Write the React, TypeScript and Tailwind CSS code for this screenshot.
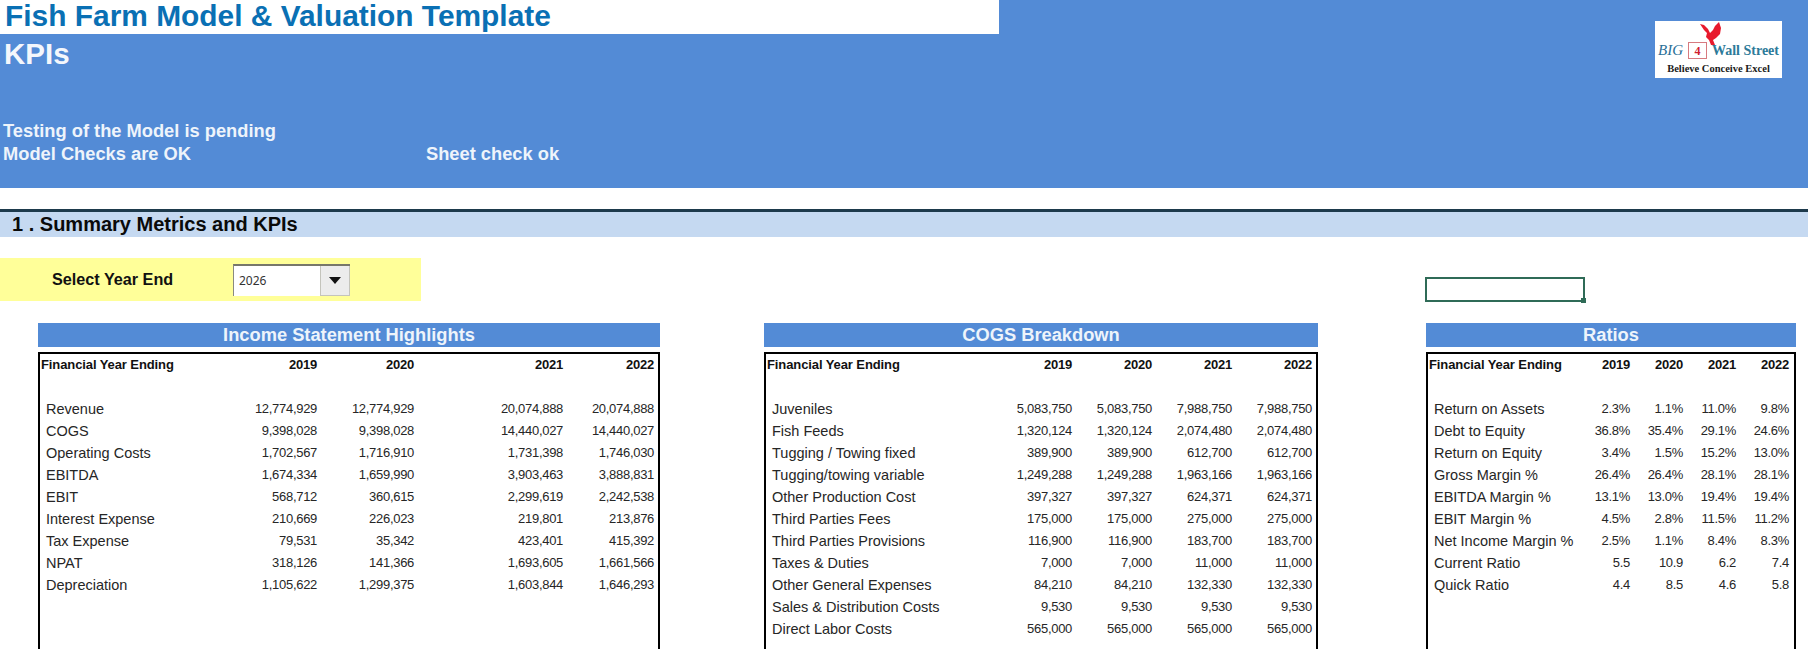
const income = [
  ["Revenue", "12,774,929", "12,774,929", "20,074,888", "20,074,888"],
  ["COGS", "9,398,028", "9,398,028", "14,440,027", "14,440,027"],
  ["Operating Costs", "1,702,567", "1,716,910", "1,731,398", "1,746,030"],
  ["EBITDA", "1,674,334", "1,659,990", "3,903,463", "3,888,831"],
  ["EBIT", "568,712", "360,615", "2,299,619", "2,242,538"],
  ["Interest Expense", "210,669", "226,023", "219,801", "213,876"],
  ["Tax Expense", "79,531", "35,342", "423,401", "415,392"],
  ["NPAT", "318,126", "141,366", "1,693,605", "1,661,566"],
  ["Depreciation", "1,105,622", "1,299,375", "1,603,844", "1,646,293"],
];

const cogs = [
  ["Juveniles", "5,083,750", "5,083,750", "7,988,750", "7,988,750"],
  ["Fish Feeds", "1,320,124", "1,320,124", "2,074,480", "2,074,480"],
  ["Tugging / Towing fixed", "389,900", "389,900", "612,700", "612,700"],
  ["Tugging/towing variable", "1,249,288", "1,249,288", "1,963,166", "1,963,166"],
  ["Other Production Cost", "397,327", "397,327", "624,371", "624,371"],
  ["Third Parties Fees", "175,000", "175,000", "275,000", "275,000"],
  ["Third Parties Provisions", "116,900", "116,900", "183,700", "183,700"],
  ["Taxes & Duties", "7,000", "7,000", "11,000", "11,000"],
  ["Other General Expenses", "84,210", "84,210", "132,330", "132,330"],
  ["Sales & Distribution Costs", "9,530", "9,530", "9,530", "9,530"],
  ["Direct Labor Costs", "565,000", "565,000", "565,000", "565,000"],
];

const ratios = [
  ["Return on Assets", "2.3%", "1.1%", "11.0%", "9.8%"],
  ["Debt to Equity", "36.8%", "35.4%", "29.1%", "24.6%"],
  ["Return on Equity", "3.4%", "1.5%", "15.2%", "13.0%"],
  ["Gross Margin %", "26.4%", "26.4%", "28.1%", "28.1%"],
  ["EBITDA Margin %", "13.1%", "13.0%", "19.4%", "19.4%"],
  ["EBIT Margin %", "4.5%", "2.8%", "11.5%", "11.2%"],
  ["Net Income Margin %", "2.5%", "1.1%", "8.4%", "8.3%"],
  ["Current Ratio", "5.5", "10.9", "6.2", "7.4"],
  ["Quick Ratio", "4.4", "8.5", "4.6", "5.8"],
];

const years = ["2019", "2020", "2021", "2022"];

function Panel({
  title,
  rows,
  width,
  cols,
  pad,
}: {
  title: string;
  rows: string[][];
  width: string;
  cols: string;
  pad: string;
}) {
  return (
    <div className={`flex flex-col ${width}`}>
      <div className="h-[24px] bg-[#538bd6] text-center text-[18.3px] leading-[24px] font-bold text-[#eef4fb]">{title}</div>
      <div className={`mt-[5px] flex-1 border-2 border-b-0 border-black ${pad}`}>
        <div className={`grid h-[44px] items-start ${cols}`}>
          <div className="pl-[1px] text-[13px] leading-[22px] font-bold tracking-[-0.1px] whitespace-nowrap text-[#111]">Financial Year Ending</div>
          {years.map((y) => (
            <div key={y} className="text-right text-[13px] leading-[22px] font-bold tracking-[-0.2px] text-[#111]">{y}</div>
          ))}
        </div>
        {rows.map(([label, ...vals]) => (
          <div key={label} className={`grid h-[22px] items-center ${cols}`}>
            <div className="pl-[6px] text-[14.5px] leading-[22px] whitespace-nowrap text-[#262626]">{label}</div>
            {vals.map((v, i) => (
              <div key={i} className="text-right text-[13px] leading-[22px] tracking-[-0.3px] whitespace-nowrap text-[#262626]">{v}</div>
            ))}
          </div>
        ))}
      </div>
    </div>
  );
}

function Logo() {
  return (
    <div className="relative mt-[21px] mr-[26px] flex h-[57px] w-[127px] flex-col items-center justify-end bg-white pb-[3px] font-['Liberation_Serif',serif]">
      <svg className="absolute top-[1px] left-[45px] h-[24px] w-[21px]" viewBox="0 0 21 24">
        <path
          d="M0 2 L4 3 L8 7 L10 11 L13 8 L15 4 L19 0 L21 6 L20 12 L16 16 L13 18 L15 23 L11 23 L9 18 L6 15 L7 11 L4 8 Z"
          fill="#e8192c"
        />
      </svg>
      <div className="flex h-[17px] items-center">
        <span className="text-[15px] text-[#2a6f97] italic">BIG</span>
        <span className="mx-[5px] flex h-[17px] w-[19px] items-center justify-center border border-[#d77a80] text-[12px] font-bold text-[#d0202f]">4</span>
        <span className="text-[14px] font-bold whitespace-nowrap text-[#2d7a99]">Wall Street</span>
      </div>
      <div className="mt-[3px] text-[10.5px] leading-[13px] font-bold whitespace-nowrap text-[#1b1b1b]">Believe Conceive Excel</div>
    </div>
  );
}

export default function App() {
  return (
    <div className="flex h-[649px] w-[1808px] flex-col overflow-hidden bg-white font-['Liberation_Sans',sans-serif]">
      <div className="flex h-[188px] justify-between bg-[#538bd6]">
        <div className="w-[999px]">
          <div className="h-[34px] bg-white pl-[5px] text-[29.9px] leading-[32px] font-bold whitespace-nowrap text-[#0a70b4]">
            Fish Farm Model &amp; Valuation Template
          </div>
          <div className="pl-[4px] text-[29.5px] leading-[40px] font-bold text-[#f4f7fc]">KPIs</div>
          <div className="mt-[45px] pl-[3px] text-[18.3px] leading-[23px] font-bold text-[#eef4fb]">Testing of the Model is pending</div>
          <div className="flex text-[18.3px] leading-[23px] font-bold text-[#eef4fb]">
            <div className="w-[426px] pl-[3px]">Model Checks are OK</div>
            <div>Sheet check ok</div>
          </div>
        </div>
        <Logo />
      </div>

      <div className="mt-[21px] h-[28px] border-t-[3px] border-[#1d3a4c] bg-[#c5d9f1] pl-[12px] text-[20px] leading-[25px] font-bold text-[#0a0a0a]">
        1 . Summary Metrics and KPIs
      </div>

      <div className="mt-[21px] flex h-[43px] items-start">
        <div className="flex h-[43px] w-[421px] items-center bg-[#ffff99] pl-[52px]">
          <div className="w-[181px] text-[16.2px] font-bold text-[#111]">Select Year End</div>
          <div className="flex h-[32px] w-[117px] border-t-2 border-l border-t-[#77776a] border-l-[#8a8a80] bg-white">
            <div className="flex-1 pl-[5px] font-['Noto_Sans',sans-serif] text-[12px] leading-[30px] text-[#333]">2026</div>
            <div className="flex w-[30px] items-center justify-center border-r border-b border-l border-[#c4c4bc] bg-[#ececec]">
              <svg className="h-[7px] w-[12px]" viewBox="0 0 12 7">
                <path d="M0 0H12L6 7Z" fill="#111" />
              </svg>
            </div>
          </div>
        </div>
        <div className="relative mt-[19px] ml-[1004px] h-[25px] w-[160px] border-2 border-[#2f6b57]">
          <div className="absolute -right-[3px] -bottom-[3px] h-[5px] w-[5px] bg-[#2f6b57]" />
        </div>
      </div>

      <div className="mt-[22px] flex flex-1 pl-[38px]">
        <Panel title="Income Statement Highlights" rows={income} width="w-[622px]" cols="grid-cols-[200px_77px_97px_149px_91px]" pad="pr-[4px]" />
        <div className="w-[104px]" />
        <Panel title="COGS Breakdown" rows={cogs} width="w-[554px]" cols="grid-cols-[226px_80px_80px_80px_80px]" pad="pr-[4px]" />
        <div className="w-[108px]" />
        <Panel title="Ratios" rows={ratios} width="w-[370px]" cols="grid-cols-[149px_53px_53px_53px_53px]" pad="pr-[5px]" />
      </div>
    </div>
  );
}
